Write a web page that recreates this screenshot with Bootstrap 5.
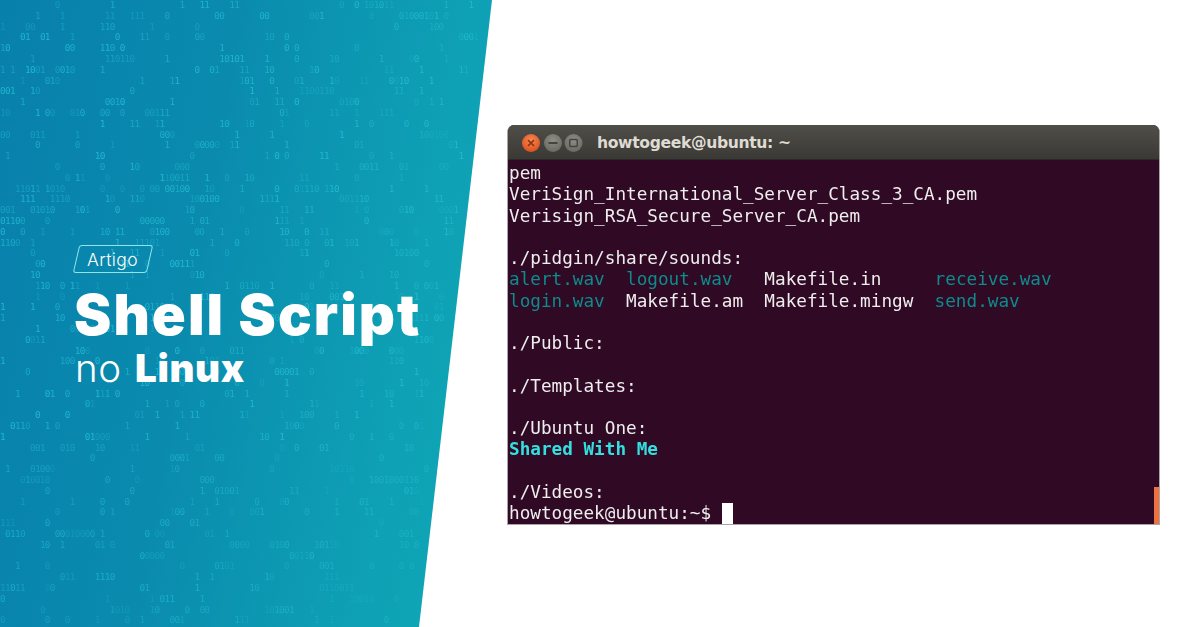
<!DOCTYPE html>
<html lang="pt">
<head>
<meta charset="utf-8">
<title>Shell Script no Linux</title>
<link href="https://cdn.jsdelivr.net/npm/bootstrap@5.3.0/dist/css/bootstrap.min.css" rel="stylesheet">
<style>
html,body{margin:0;height:627px;overflow:hidden;background:#fff}
.stage{width:1200px;height:627px}
.hero{width:492px;height:627px;padding:245px 0 0 73px;color:#fff;
  background:linear-gradient(100deg,#0880ac 0%,#0a8bae 40%,#0e9fb4 75%,#10a8b8 100%);
  clip-path:polygon(0 0,492px 0,419px 627px,0 627px);font-family:Inter,"Open Sans",sans-serif}
.rain{inset:0;margin:0;font:9.4px/10.8px "DejaVu Sans Mono",monospace;letter-spacing:-.66px;color:#24bdd4;overflow:hidden;white-space:pre;filter:blur(.25px)}
.rain span{display:block}
.rain i{font-style:normal}
.tag{width:80px;height:28px;font:300 17.5px/27px Inter,sans-serif;letter-spacing:.4px;padding-right:1px}
.tag::before{content:"";position:absolute;inset:0 3px;border:1px solid #8fe6ee;border-radius:3px;transform:skewX(-13deg)}
.headline{font-weight:900;font-size:56px;line-height:62px;letter-spacing:2.1px;margin:11px 0 0 1px;white-space:nowrap}
.subline{font-weight:300;font-size:38.5px;line-height:44px;margin:0 0 0 2px;white-space:nowrap;letter-spacing:.6px}
.subline b{font-weight:900;letter-spacing:.6px;margin-left:2px}
.right-pane{padding:125px 0 0 15px}
.term{width:653px;height:400px;border-radius:7px 7px 0 0;overflow:hidden;background:#300a24;border:solid #aaa3a8;border-width:0 1px 1px 1px}
.term-bar{height:35px;background:linear-gradient(#4f4e48,#3a3935);padding:1px 0 0 13px;gap:10px;border-bottom:1px solid #2b2a27}
.term-title{font:700 15.6px/1 "DejaVu Sans",sans-serif;color:#dfdbd2;margin-left:4px;padding-top:3px;letter-spacing:-.35px}
.term-body{margin:0;padding:3px 0 0 1px;font:17.68px/21.27px "DejaVu Sans Mono",monospace;color:#eee;overflow:hidden;filter:blur(.3px)}
.wav{color:#0d8b8d}
.dir{color:#34dfdf;font-weight:700}
.cursor{display:inline-block;width:11px;height:21px;background:#fff;vertical-align:-5px}
.scroll-thumb{right:0;bottom:0;width:5px;height:37px;background:#ee7240}
</style>
</head>
<body>
<div class="stage d-flex">
  <section class="hero position-relative flex-shrink-0">
    <pre class="rain position-absolute" id="rain" aria-hidden="true"></pre>
    <div class="position-relative">
      <div class="tag position-relative d-flex align-items-center justify-content-center">Artigo</div>
      <h1 class="headline">Shell Script</h1>
      <p class="subline">no <b>Linux</b></p>
    </div>
  </section>
  <section class="right-pane flex-grow-1">
    <div class="term position-relative">
      <div class="term-bar d-flex align-items-center">
        <svg width="62" height="20" viewBox="0 0 62 20" aria-hidden="true">
          <defs>
            <radialGradient id="o" cx=".5" cy=".35" r=".7"><stop offset="0" stop-color="#f58a52"/><stop offset="1" stop-color="#dd4a18"/></radialGradient>
            <radialGradient id="g" cx=".5" cy=".35" r=".7"><stop offset="0" stop-color="#8f8e86"/><stop offset="1" stop-color="#67665f"/></radialGradient>
          </defs>
          <circle cx="10" cy="10" r="9" fill="url(#o)"/>
          <path d="M7 7.2l6 5.6M13 7.2l-6 5.6" stroke="#8c3413" stroke-width="1.6"/>
          <circle cx="32" cy="10" r="9" fill="url(#g)"/>
          <path d="M27.5 10h9" stroke="#45443f" stroke-width="1.8"/>
          <circle cx="52.5" cy="10" r="9" fill="url(#g)"/>
          <rect x="48.7" y="6.4" width="7.6" height="7.2" rx="1" fill="none" stroke="#45443f" stroke-width="1.5"/>
        </svg>
        <span class="term-title">howtogeek@ubuntu: ~</span>
      </div>
<pre class="term-body">pem
VeriSign_International_Server_Class_3_CA.pem
Verisign_RSA_Secure_Server_CA.pem

./pidgin/share/sounds:
<span class="wav">alert.wav</span>  <span class="wav">logout.wav</span>   Makefile.in     <span class="wav">receive.wav</span>
<span class="wav">login.wav</span>  Makefile.am  Makefile.mingw  <span class="wav">send.wav</span>

./Public:

./Templates:

./Ubuntu One:
<span class="dir">Shared With Me</span>

./Videos:
howtogeek@ubuntu:~$ <span class="cursor"></span></pre>
      <div class="scroll-thumb position-absolute"></div>
    </div>
  </section>
</div>
<script>
(function(){
  var s=20240611;
  function r(){s=(s*1664525+1013904223)>>>0;return ((s>>>8)&0xffffff)/16777216;}
  var out=[];
  for(var y=0;y<58;y++){
    var top=y*10.8, edge=492-(top+10)*73/627, cols=Math.floor(edge/5)-1;
    var fade=y>40?0.75:1;
    var line='',x=0;
    while(x<cols){
      if(r()<0.36){
        var n=1+Math.floor(r()*r()*r()*5),o=((0.3+r()*0.6)*fade).toFixed(2),t='';
        if(x+n>cols)n=cols-x;
        for(var k=0;k<n;k++)t+=r()<.5?'0':'1';
        line+='<i style="opacity:'+o+'">'+t+'</i>';x+=n;
      }else{
        var g=1+Math.floor(r()*5);line+=' '.repeat(g);x+=g;
      }
    }
    out.push('<span>'+line+'</span>');
  }
  document.getElementById('rain').innerHTML=out.join('');
})();
</script>
</body>
</html>
